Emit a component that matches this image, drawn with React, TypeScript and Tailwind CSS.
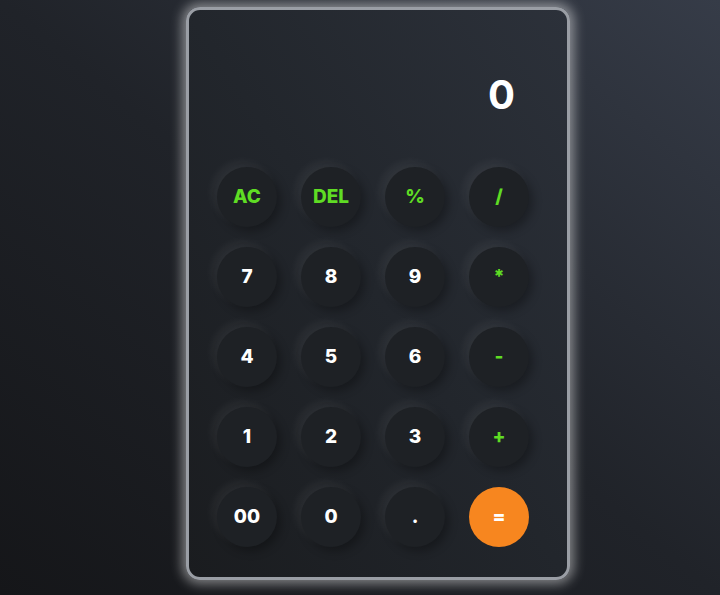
import React from "react";

const keys: { label: string; kind: "op" | "num" | "eq" }[] = [
  { label: "AC", kind: "op" },
  { label: "DEL", kind: "op" },
  { label: "%", kind: "op" },
  { label: "/", kind: "op" },
  { label: "7", kind: "num" },
  { label: "8", kind: "num" },
  { label: "9", kind: "num" },
  { label: "*", kind: "op" },
  { label: "4", kind: "num" },
  { label: "5", kind: "num" },
  { label: "6", kind: "num" },
  { label: "-", kind: "op" },
  { label: "1", kind: "num" },
  { label: "2", kind: "num" },
  { label: "3", kind: "num" },
  { label: "+", kind: "op" },
  { label: "00", kind: "num" },
  { label: "0", kind: "num" },
  { label: ".", kind: "num" },
  { label: "=", kind: "eq" },
];

export default function App() {
  return (
    <div
      className="w-[720px] h-[595px] overflow-hidden bg-gradient-to-tr from-[#151619] via-[#202329] to-[#363c48] flex pl-[186px] pt-[7px]"
      style={{ fontFamily: "Inter, 'Open Sans', sans-serif" }}
    >
      <div className="w-[384px] h-[573px] rounded-[14px] border-[3px] border-[#9a9ea5] shadow-[0_0_12px_4px_rgba(255,255,255,0.45)] bg-gradient-to-tr from-[#1a1c1f] via-[#22262c] to-[#2c313a] flex flex-col">
        <div className="h-[157px] flex items-start justify-end pr-[52px] pt-[65px]">
          <span className="text-white text-[40px] font-bold leading-none">0</span>
        </div>
        <div className="grid grid-cols-[repeat(4,60px)] gap-x-[24px] gap-y-[20px] pl-[28px]">
          {keys.map((k) => (
            <div
              key={k.label}
              className={
                k.kind === "eq"
                  ? "w-[60px] h-[60px] rounded-full bg-[#f7861f] flex items-center justify-center text-white text-[19px] font-extrabold"
                  : "w-[60px] h-[60px] rounded-full bg-[#1e2125] shadow-[-5px_-5px_10px_rgba(255,255,255,0.06),4px_4px_10px_rgba(0,0,0,0.3)] flex items-center justify-center text-[19px] font-extrabold " +
                    (k.kind === "op" ? "text-[#5fdc24]" : "text-white")
              }
            >
              {k.label}
            </div>
          ))}
        </div>
      </div>
    </div>
  );
}
